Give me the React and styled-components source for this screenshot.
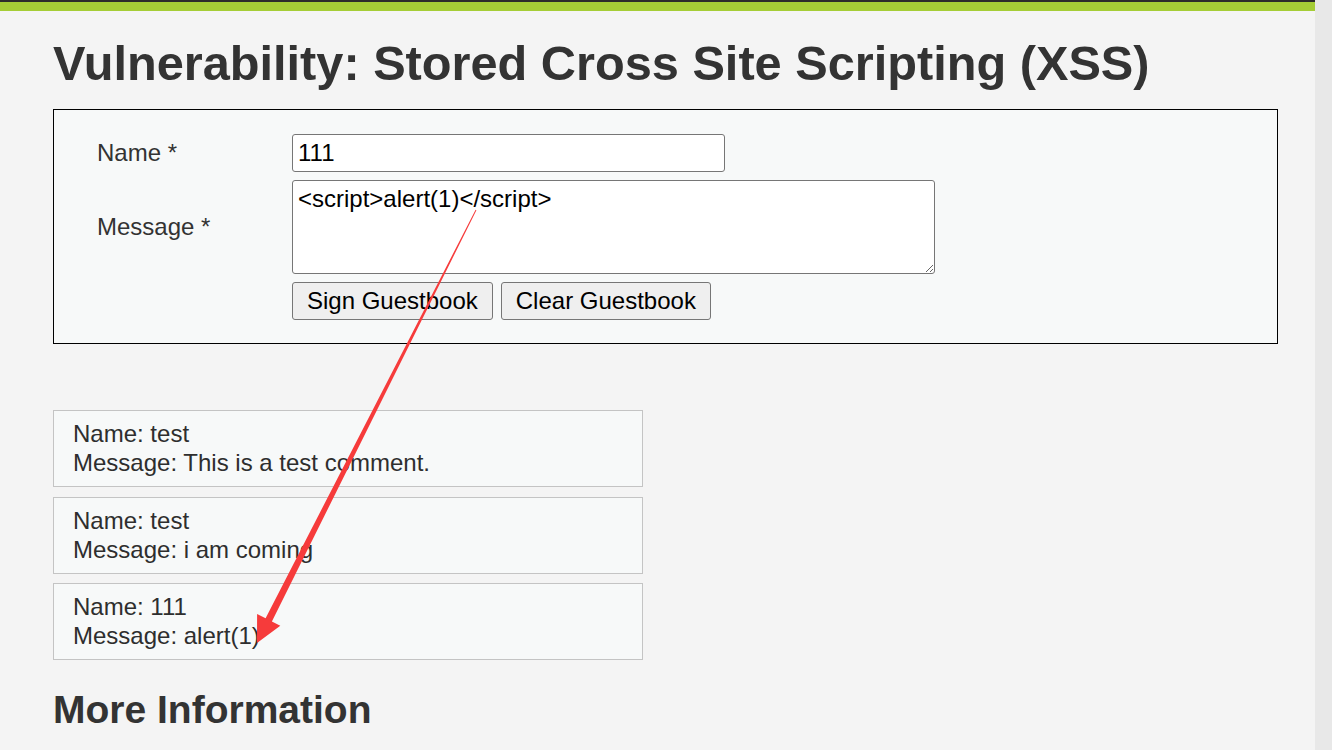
import React from "react";
import styled, { createGlobalStyle } from "styled-components";

const GlobalStyle = createGlobalStyle`
  html, body {
    margin: 0;
    padding: 0;
    width: 1332px;
    height: 750px;
    overflow: hidden;
    background: #f4f4f4;
    font-family: "Liberation Sans", Arial, sans-serif;
  }
  * { box-sizing: border-box; }
`;

const Shell = styled.div`
  position: relative;
  display: flex;
  width: 1332px;
  height: 750px;
  overflow: hidden;
`;

const Page = styled.div`
  flex: 1;
  display: flex;
  flex-direction: column;
  background: #f4f4f4;
  color: #333;
`;

const TopBar = styled.div`
  height: 2px;
  background: #2c2c2c;
`;

const GreenBar = styled.div`
  height: 9px;
  background: #a5cd36;
`;

const Content = styled.main`
  padding: 24px 0 0 53px;
  display: flex;
  flex-direction: column;
`;

const Title = styled.h1`
  margin: 0;
  font-size: 48.7px;
  line-height: 56px;
  font-weight: 700;
  color: #333;
  white-space: nowrap;
`;

const FormBox = styled.form`
  margin-top: 18px;
  width: 1225px;
  border: 1px solid #000;
  background: #f7f9f9;
  padding: 24px 0 23px 43px;
  display: grid;
  grid-template-columns: 195px auto;
  row-gap: 8px;
  align-items: center;
  justify-items: start;
`;

const Label = styled.label`
  font-size: 24px;
  color: #333;
`;

const TextInput = styled.input`
  width: 433px;
  height: 38px;
  border: 1px solid #767676;
  border-radius: 3px;
  background: #fff;
  padding: 0 5px;
  font-family: "Liberation Sans", Arial, sans-serif;
  font-size: 24px;
  color: #000;
  outline: none;
`;

const TextArea = styled.textarea`
  width: 643px;
  height: 94px;
  border: 1px solid #767676;
  border-radius: 3px;
  background: #fff;
  padding: 4px 5px;
  font-family: "Liberation Sans", Arial, sans-serif;
  font-size: 24px;
  line-height: 28px;
  color: #000;
  outline: none;
  resize: both;
`;

const ButtonRow = styled.div`
  grid-column: 2;
  display: flex;
  gap: 8px;
`;

const Button = styled.button`
  height: 38px;
  padding: 0 14px;
  border: 1px solid #767676;
  border-radius: 3px;
  background: #efefef;
  font-family: "Liberation Sans", Arial, sans-serif;
  font-size: 24px;
  color: #000;
`;

const Entries = styled.div`
  margin-top: 66px;
  width: 590px;
  display: flex;
  flex-direction: column;
  gap: 9.5px;
`;

const Entry = styled.div`
  height: 77px;
  border: 1px solid #c4c4c4;
  background: #f7f9f9;
  padding: 8px 19px;
  font-size: 24px;
  line-height: 29px;
  color: #2e2e2e;
`;

const SubTitle = styled.h2`
  margin: 28px 0 0;
  font-size: 39px;
  line-height: 44px;
  font-weight: 700;
  color: #333;
`;

const ScrollTrack = styled.div`
  width: 17px;
  height: 100%;
  background: #e8e8e8;
`;

const Annotation = styled.svg`
  position: absolute;
  left: 0;
  top: 0;
  pointer-events: none;
`;

const entries = [
  { name: "test", message: "This is a test comment." },
  { name: "test", message: "i am coming" },
  { name: "111", message: "alert(1)" },
];

function Arrow() {
  const sx = 476, sy = 210;
  const tx = 257, ty = 643;
  const dx = tx - sx, dy = ty - sy;
  const len = Math.hypot(dx, dy);
  const ux = dx / len, uy = dy / len;
  const nx = -uy, ny = ux;
  const bx = tx - ux * 26, by = ty - uy * 26;
  const p = (x, y) => `${x.toFixed(1)},${y.toFixed(1)}`;
  const pts = [
    p(sx + nx * 0.5, sy + ny * 0.5),
    p(bx + nx * 3.5, by + ny * 3.5),
    p(bx + nx * 13, by + ny * 13),
    p(tx, ty),
    p(bx - nx * 13, by - ny * 13),
    p(bx - nx * 3.5, by - ny * 3.5),
    p(sx - nx * 0.5, sy - ny * 0.5),
  ].join(" ");
  return (
    <Annotation width="1332" height="750" viewBox="0 0 1332 750">
      <polygon points={pts} fill="#f63b3b" />
    </Annotation>
  );
}

export default function App() {
  return (
    <>
      <GlobalStyle />
      <Shell>
        <Page>
          <TopBar />
          <GreenBar />
          <Content>
            <Title>Vulnerability: Stored Cross Site Scripting (XSS)</Title>
            <FormBox onSubmit={(e) => e.preventDefault()}>
              <Label>Name *</Label>
              <TextInput defaultValue="111" />
              <Label>Message *</Label>
              <TextArea defaultValue="<script>alert(1)</script>" />
              <ButtonRow>
                <Button type="button">Sign Guestbook</Button>
                <Button type="button">Clear Guestbook</Button>
              </ButtonRow>
            </FormBox>
            <Entries>
              {entries.map((e, i) => (
                <Entry key={i}>
                  <div>Name: {e.name}</div>
                  <div>Message: {e.message}</div>
                </Entry>
              ))}
            </Entries>
            <SubTitle>More Information</SubTitle>
          </Content>
        </Page>
        <ScrollTrack />
        <Arrow />
      </Shell>
    </>
  );
}
